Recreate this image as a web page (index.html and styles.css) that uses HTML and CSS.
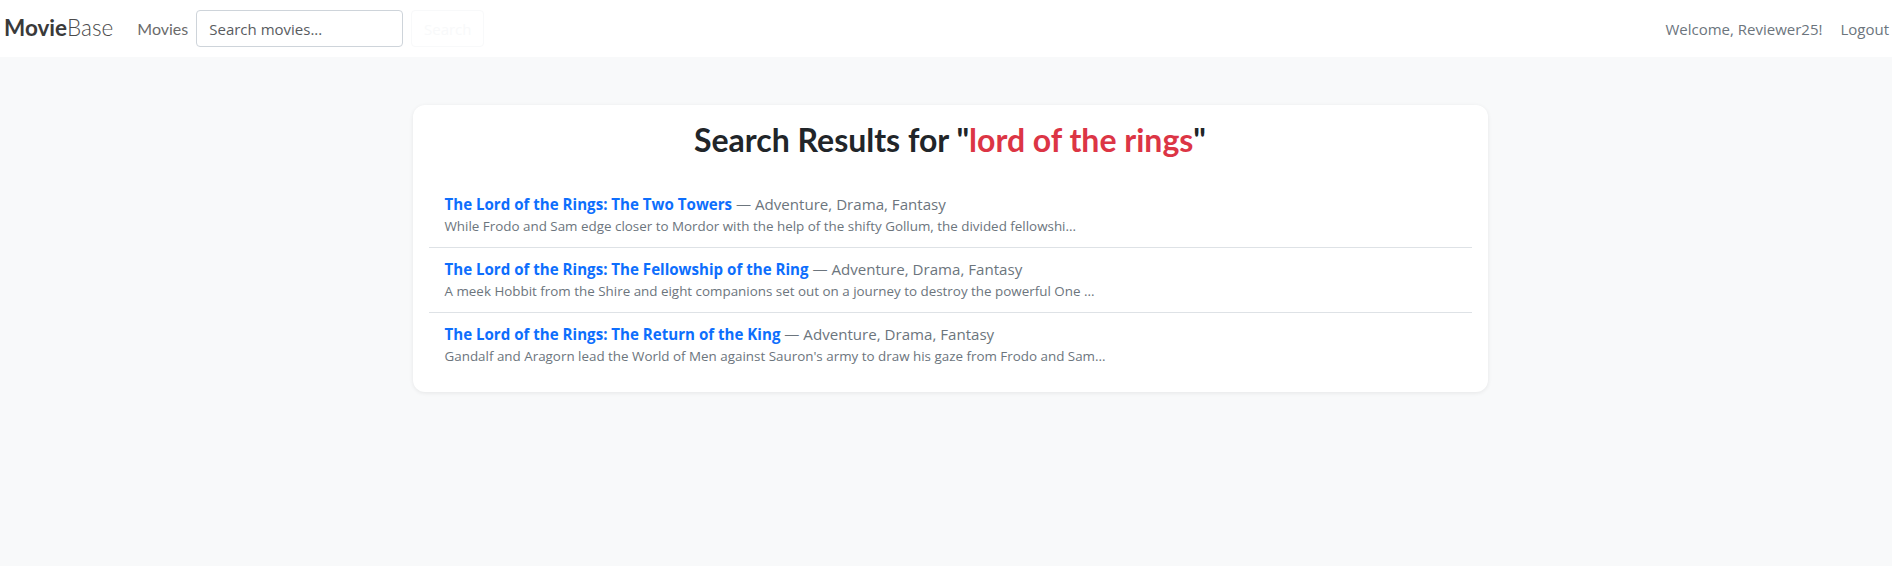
FILE: index.html
```html
<!DOCTYPE html>
<html lang="en">
<head>
<meta charset="utf-8">
<title>MovieBase - Search</title>
<link rel="stylesheet" href="styles.css">
</head>
<body>
<nav class="navbar">
  <div class="nav-left">
    <a class="brand" href="#"><span class="brand-bold">Movie</span><span class="brand-light">Base</span></a>
    <a class="nav-link" href="#">Movies</a>
    <form class="search-form">
      <input class="search-input" type="text" placeholder="Search movies...">
      <button class="search-btn" type="button">Search</button>
    </form>
  </div>
  <div class="nav-right">
    <span class="welcome">Welcome, Reviewer25!</span>
    <a class="nav-link logout" href="#">Logout</a>
  </div>
</nav>
<main class="main">
  <section class="card">
    <h2 class="heading">Search Results for "<span class="query">lord of the rings</span>"</h2>
    <ul class="results">
      <li class="result">
        <div class="result-title"><a href="#">The Lord of the Rings: The Two Towers</a> <span class="genres">— Adventure, Drama, Fantasy</span></div>
        <div class="result-desc">While Frodo and Sam edge closer to Mordor with the help of the shifty Gollum, the divided fellowshi...</div>
      </li>
      <li class="result">
        <div class="result-title"><a href="#">The Lord of the Rings: The Fellowship of the Ring</a> <span class="genres">— Adventure, Drama, Fantasy</span></div>
        <div class="result-desc">A meek Hobbit from the Shire and eight companions set out on a journey to destroy the powerful One ...</div>
      </li>
      <li class="result">
        <div class="result-title"><a href="#">The Lord of the Rings: The Return of the King</a> <span class="genres">— Adventure, Drama, Fantasy</span></div>
        <div class="result-desc">Gandalf and Aragorn lead the World of Men against Sauron's army to draw his gaze from Frodo and Sam...</div>
      </li>
    </ul>
  </section>
</main>
</body>
</html>
```

FILE: styles.css
```css
* { box-sizing: border-box; }
html, body { margin: 0; padding: 0; }
body {
  background: #f8f9fa;
  font-family: "Open Sans", "Noto Sans", sans-serif;
  color: #212529;
  min-height: 566px;
}
a { text-decoration: none; }

.navbar {
  height: 57px;
  background: #fff;
  display: flex;
  align-items: center;
  justify-content: space-between;
  padding: 0 3px 0 4px;
}
.nav-left, .nav-right {
  display: flex;
  align-items: center;
}
.brand {
  font-family: Lato, sans-serif;
  font-size: 22.5px;
  color: #3a3a3a;
  margin-right: 24px;
  line-height: 1;
}
.brand-bold { font-weight: 700; }
.brand-light { font-weight: 300; color: #4a4a4a; }
.nav-link {
  font-family: Lato, sans-serif;
  font-size: 16px;
  color: #6b6b6b;
}
.search-form {
  display: flex;
  align-items: center;
  margin-left: 8px;
}
.search-input {
  width: 207px;
  height: 37px;
  border: 1px solid #ced4da;
  border-radius: 4px;
  padding: 0 12px;
  font-family: "Open Sans", sans-serif;
  font-size: 15px;
  color: #212529;
  outline: none;
}
.search-input::placeholder { color: #595c5f; }
.search-btn {
  margin-left: 8px;
  width: 73px;
  height: 37px;
  background: #fff;
  border: 1px solid #f8f9fa;
  border-radius: 4px;
  color: #f8f9fa;
  font-family: "Open Sans", sans-serif;
  font-size: 15px;
}
.welcome {
  font-family: "Open Sans", sans-serif;
  font-size: 15px;
  color: #6c757d;
  margin-right: 18px;
}
.logout {
  font-family: "Open Sans", sans-serif;
  font-size: 15px;
  color: #6c757d;
}

.main {
  display: flex;
  justify-content: center;
  padding-top: 48px;
  padding-left: 8px;
}
.card {
  width: 1075px;
  background: #fff;
  border-radius: 12px;
  box-shadow: 0 1px 4px rgba(0,0,0,0.08);
  padding: 16px 16px 15px;
}
.heading {
  font-family: Lato, sans-serif;
  font-weight: 700;
  font-size: 32px;
  line-height: 38px;
  text-align: center;
  margin: 0 0 24px;
  color: #212529;
}
.query { color: #dc3545; }
.results {
  list-style: none;
  margin: 0;
  padding: 0;
}
.result {
  padding: 9px 16px 10px;
  border-bottom: 1px solid #dee2e6;
}
.result:last-child { border-bottom: none; }
.result-title {
  font-size: 15.1px;
  line-height: 24px;
}
.result-title a {
  color: #0d6efd;
  font-weight: 700;
}
.genres { color: #6c757d; }
.result-desc {
  font-size: 13.4px;
  line-height: 21px;
  color: #6c757d;
}
```
